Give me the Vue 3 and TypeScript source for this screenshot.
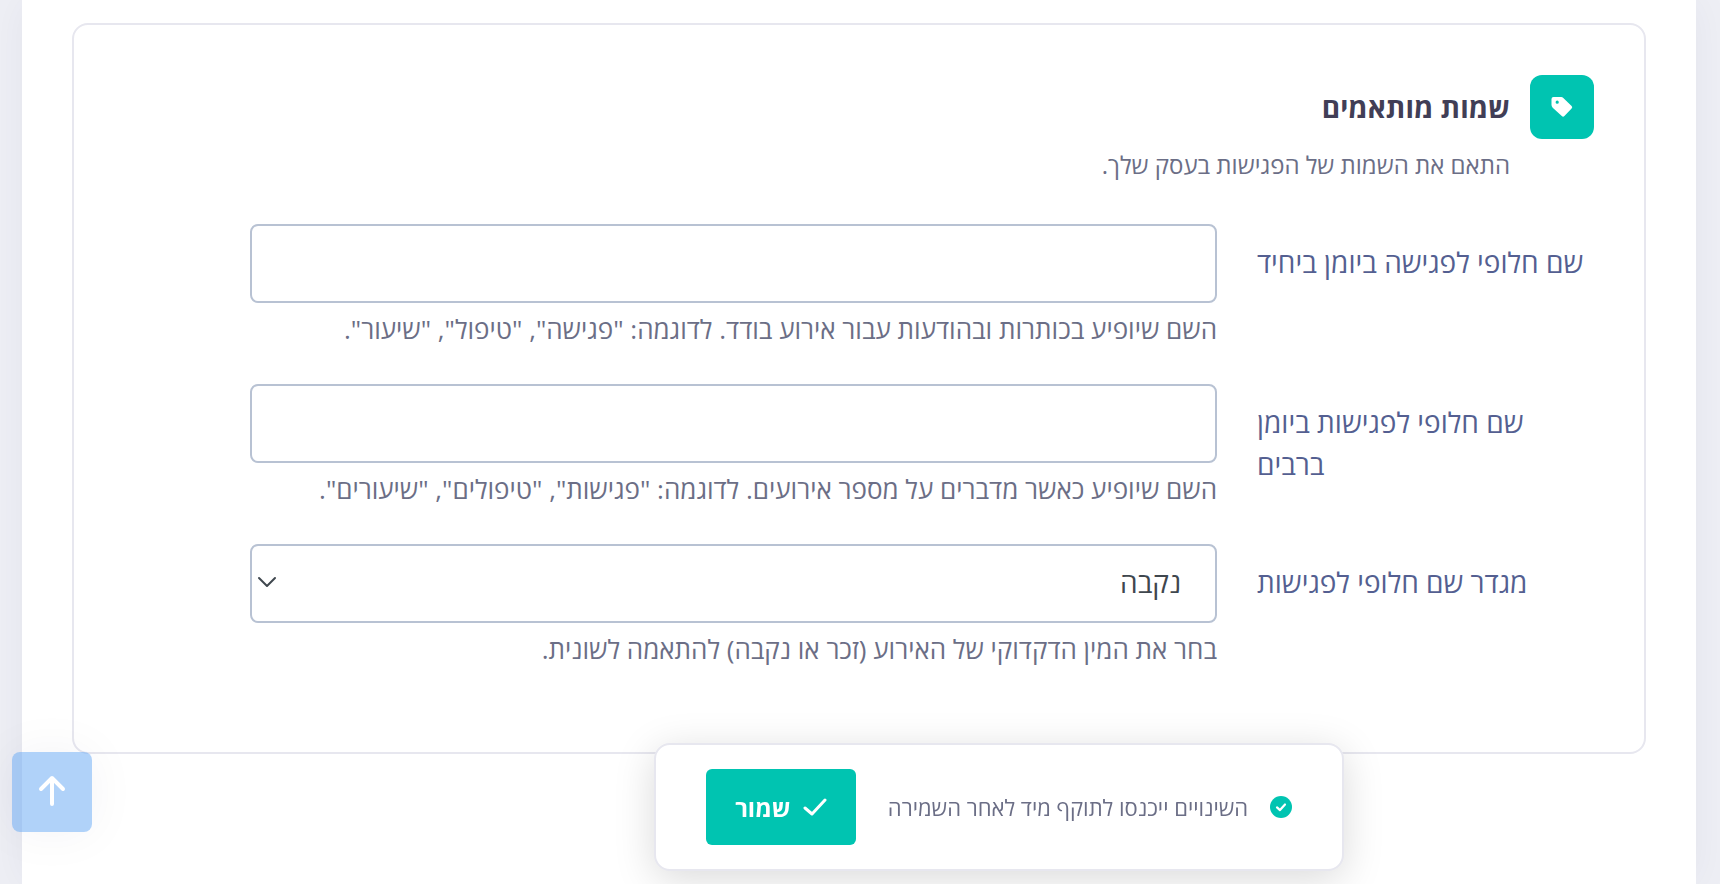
<script setup lang="ts">
import { ref } from 'vue'

interface TextField {
  id: string
  label: string
  hint: string
}

const textFields: TextField[] = [
  {
    id: 'name-singular',
    label: 'שם חלופי לפגישה ביומן ביחיד',
    hint: 'השם שיופיע בכותרות ובהודעות עבור אירוע בודד. לדוגמה: "פגישה", "טיפול", "שיעור".',
  },
  {
    id: 'name-plural',
    label: 'שם חלופי לפגישות ביומן ברבים',
    hint: 'השם שיופיע כאשר מדברים על מספר אירועים. לדוגמה: "פגישות", "טיפולים", "שיעורים".',
  },
]

const names = ref<Record<string, string>>({ 'name-singular': '', 'name-plural': '' })
const gender = ref('female')

function scrollToTop() {
  window.scrollTo({ top: 0, behavior: 'smooth' })
}
</script>

<template>
  <div class="page" dir="rtl" lang="he">
    <main class="sheet">
      <section class="card">
        <header class="card-head">
          <span class="badge">
            <svg width="24" height="24" viewBox="0 0 24 24" aria-hidden="true">
              <path
                fill="#fff"
                fill-rule="evenodd"
                d="M3.500 2h7.700q1.200 0 2.100.9l8.300 8.100q1.300 1.300 0 2.600l-7.200 7.500q-1.300 1.300-2.600 0L2.700 12.700Q1.500 11.500 1.500 10.100V4q0-2 2-2zM7.200 5.600a1.600 1.600 0 1 0 0 3.200 1.600 1.600 0 0 0 0-3.200z"
              />
            </svg>
          </span>
          <h2 class="title">שמות מותאמים</h2>
          <p class="subtitle">התאם את השמות של הפגישות בעסק שלך.</p>
        </header>

        <form id="names-form" class="form" @submit.prevent>
          <div v-for="field in textFields" :key="field.id" class="row">
            <label class="label" :for="field.id">{{ field.label }}</label>
            <div class="field">
              <input :id="field.id" v-model="names[field.id]" class="control" type="text" />
              <p class="hint">{{ field.hint }}</p>
            </div>
          </div>
          <div class="row">
            <label class="label" for="name-gender">מגדר שם חלופי לפגישות</label>
            <div class="field">
              <div class="select-wrap">
                <select id="name-gender" v-model="gender" class="control">
                  <option value="female">נקבה</option>
                  <option value="male">זכר</option>
                </select>
                <svg class="chevron" width="20" height="12" viewBox="0 0 20 12" aria-hidden="true">
                  <path d="M2 2l8 8 8-8" fill="none" stroke="#3f474e" stroke-width="2" stroke-linecap="round" stroke-linejoin="round" />
                </svg>
              </div>
              <p class="hint">בחר את המין הדקדוקי של האירוע (זכר או נקבה) להתאמה לשונית.</p>
            </div>
          </div>
        </form>
      </section>
    </main>

    <div class="save-dock">
      <div class="save-bar">
        <svg width="22" height="22" viewBox="0 0 22 22" aria-hidden="true">
          <circle cx="11" cy="11" r="11" fill="#00c4b1" />
          <path d="M7 11.400l3 2.700 5-5.600" fill="none" stroke="#fff" stroke-width="2.200" stroke-linecap="round" stroke-linejoin="round" />
        </svg>
        <span class="save-note">השינויים ייכנסו לתוקף מיד לאחר השמירה</span>
        <button class="save" type="submit" form="names-form">
          <svg width="24" height="20" viewBox="0 0 24 20" aria-hidden="true">
            <path d="M2 11l7 6L22 3" fill="none" stroke="#fff" stroke-width="3" stroke-linecap="round" stroke-linejoin="round" />
          </svg>
          <span>שמור</span>
        </button>
      </div>
    </div>

    <button class="to-top" type="button" aria-label="חזרה למעלה" @click="scrollToTop">
      <svg width="32" height="36" viewBox="0 0 32 36" aria-hidden="true">
        <path d="M16 30V4M5 15L16 4l11 11" fill="none" stroke="#fff" stroke-width="4" stroke-linecap="round" stroke-linejoin="round" />
      </svg>
    </button>
  </div>
</template>

<style>
body {
  margin: 0;
  background: #eeeff5;
}
</style>

<style scoped>
.page,
.page * {
  box-sizing: border-box;
}

.page {
  display: flex;
  min-height: 100vh;
  padding: 0 24px 0 22px;
  font-family: "Open Sans", "Liberation Sans", sans-serif;
  color: #6b6e86;
}

.sheet {
  flex: 1;
  padding: 23px 50px 130px;
  background: #fff;
  box-shadow: 0 0 40px rgba(40, 44, 80, 0.05);
}

.card {
  padding: 50px 50px 83px;
  border: 2px solid #e7e7ef;
  border-radius: 16px;
}

.card-head {
  display: grid;
  grid-template-columns: 64px 1fr;
  column-gap: 20px;
  align-items: center;
}

.badge {
  display: grid;
  place-items: center;
  height: 64px;
  border-radius: 12px;
  background: #00c4b1;
}

.title {
  margin: 0;
  font-size: 28px;
  font-weight: 700;
  line-height: 40px;
  color: #413e56;
}

.subtitle {
  grid-column: 2;
  margin: 8px 0 0;
  font-size: 24px;
  line-height: 36px;
}

.form {
  display: grid;
  row-gap: 35px;
  margin-top: 41px;
  padding-left: 126px;
}

.row {
  display: grid;
  grid-template-columns: 337fr 967fr;
  column-gap: 40px;
  align-items: start;
}

.label {
  padding-top: 17px;
  font-size: 28px;
  line-height: 42px;
  text-align: left;
  color: #545f91;
}

.control {
  display: block;
  width: 100%;
  height: 79px;
  padding: 0 34px 4px;
  border: 2px solid #b8c2d3;
  border-radius: 8px;
  background: #fff;
  font: inherit;
  font-size: 28px;
  color: #3f474e;
  appearance: none;
}

.select-wrap {
  position: relative;
}

.chevron {
  position: absolute;
  top: 32px;
  left: 7px;
  pointer-events: none;
}

.hint {
  margin: 6px 0 0;
  font-size: 26px;
  line-height: 40px;
}

.save-dock {
  position: fixed;
  right: 0;
  bottom: 13px;
  left: 278px;
  display: flex;
  justify-content: center;
}

.save-bar {
  display: flex;
  align-items: center;
  gap: 22px;
  padding: 24px 50px;
  border: 2px solid #e7e7ef;
  border-radius: 16px;
  background: #fff;
  box-shadow: 0 8px 40px rgba(0, 0, 0, 0.15);
}

.save-note {
  font-size: 22px;
  line-height: 32px;
}

.save {
  display: flex;
  align-items: center;
  justify-content: center;
  gap: 12px;
  width: 150px;
  height: 76px;
  margin-right: 10px;
  padding: 0;
  border: 0;
  border-radius: 6px;
  background: #00c4b1;
  font: inherit;
  font-size: 24px;
  font-weight: 700;
  color: #fff;
}

.to-top {
  position: fixed;
  bottom: 52px;
  left: 12px;
  display: grid;
  place-items: center;
  width: 80px;
  height: 80px;
  padding: 0;
  border: 0;
  border-radius: 8px;
  background: rgba(98, 166, 244, 0.5);
  box-shadow: 0 0 50px rgba(40, 44, 80, 0.05);
}
</style>
